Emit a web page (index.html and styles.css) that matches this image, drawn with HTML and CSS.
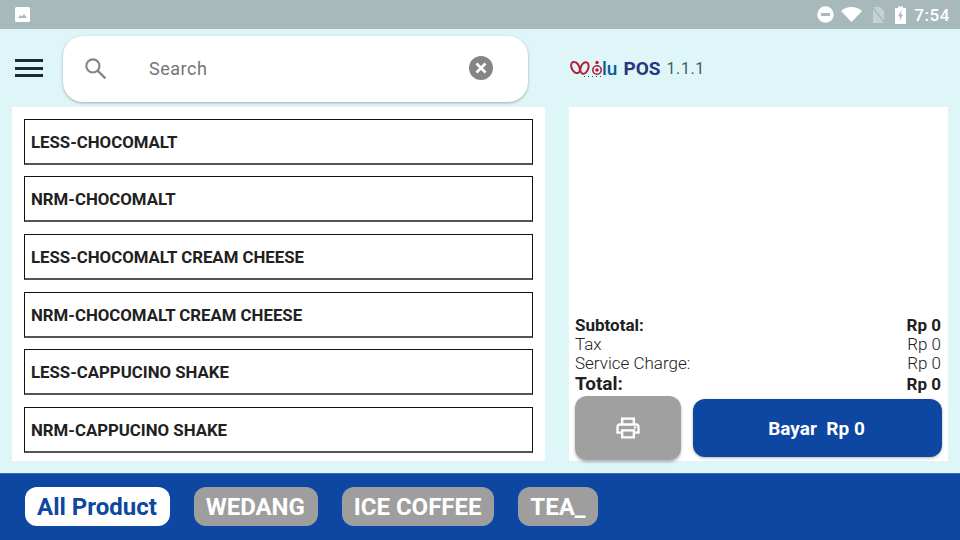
FILE: index.html
```html
<!DOCTYPE html>
<html lang="en">
<head>
    <meta charset="UTF-8">
    <meta name="viewport" content="width=device-width, initial-scale=1.0">
    <title>Woolu POS</title>
    <link rel="stylesheet" href="styles.css">
</head>
<body>
    <div class="status-bar">
        <svg class="status-image" width="15" height="15" viewBox="0 0 15 15">
            <rect width="15" height="15" rx="1.500" fill="#fff"/>
            <path d="M3 11l2.500-3 1.500 1.500 2-2.500 3 4z" fill="#a8b9bc"/>
        </svg>
        <div class="status-right">
            <svg width="17" height="17" viewBox="0 0 17 17">
                <circle cx="8.500" cy="8.500" r="8.200" fill="#fff"/>
                <rect x="4" y="7" width="9" height="3" fill="#a8b9bc"/>
            </svg>
            <svg class="status-wifi" width="21" height="15" viewBox="0 0 21 15">
                <path d="M0 4C3 1.500 6.500 0 10.500 0S18 1.500 21 4L10.500 15z" fill="#fff"/>
            </svg>
            <svg class="status-sim" width="15" height="18" viewBox="0 0 15 18">
                <path d="M2 1h7l4 4v12H2z" fill="#c6d1d3"/>
                <path d="M1 1l13 16" stroke="#a8b9bc" stroke-width="1.500"/>
            </svg>
            <svg class="status-battery" width="11" height="18" viewBox="0 0 11 18">
                <path d="M3 2V0.500h5V2h3v16H0V2z" fill="#fff"/>
                <path d="M6.500 4L3 10.500h2.200L4.500 15 8 8.500H5.800z" fill="#a8b9bc"/>
            </svg>
            <span class="status-time">7:54</span>
        </div>
    </div>

    <header class="top">
        <div class="menu-icon">
            <span></span>
            <span></span>
            <span></span>
        </div>
        <div class="search">
            <svg class="search-icon" width="25" height="25" viewBox="0 0 24 24">
                <circle cx="9.500" cy="9.500" r="6.300" fill="none" stroke="#858585" stroke-width="2"/>
                <path d="M14 14l7.500 7.500" stroke="#858585" stroke-width="2.200"/>
            </svg>
            <span class="search-text">Search</span>
            <svg class="search-clear" width="26" height="26" viewBox="0 0 26 26">
                <circle cx="13" cy="13" r="12" fill="#858585"/>
                <path d="M8.500 8.500l9 9M17.500 8.500l-9 9" stroke="#fff" stroke-width="2.600"/>
            </svg>
        </div>
        <div class="brand">
            <svg class="brand-logo" width="33" height="17" viewBox="0 0 33 17">
                <ellipse cx="5.500" cy="7.500" rx="3.800" ry="6" transform="rotate(-28 5.500 7.500)" fill="none" stroke="#b2203a" stroke-width="2"/>
                <ellipse cx="14.500" cy="8" rx="3.800" ry="6" transform="rotate(22 14.500 8)" fill="none" stroke="#b2203a" stroke-width="2"/>
                <circle cx="27" cy="10" r="4.200" fill="none" stroke="#b2203a" stroke-width="1.600"/>
                <circle cx="27" cy="10" r="1.800" fill="#b2203a"/>
                <circle cx="27" cy="2.500" r="1.700" fill="#b2203a"/>
                <path d="M14 16.500h20" stroke="#37474f" stroke-dasharray="1 3"/>
            </svg>
            <span class="brand-lu">lu</span>
            <span class="brand-pos">POS</span>
            <span class="brand-version">1.1.1</span>
        </div>
    </header>

    <main class="content">
        <section class="products">
            <div class="product">LESS-CHOCOMALT</div>
            <div class="product">NRM-CHOCOMALT</div>
            <div class="product">LESS-CHOCOMALT CREAM CHEESE</div>
            <div class="product">NRM-CHOCOMALT CREAM CHEESE</div>
            <div class="product">LESS-CAPPUCINO SHAKE</div>
            <div class="product">NRM-CAPPUCINO SHAKE</div>
        </section>

        <section class="cart">
            <div class="totals">
                <div class="row row-bold"><span>Subtotal:</span><span>Rp 0</span></div>
                <div class="row"><span>Tax</span><span>Rp 0</span></div>
                <div class="row"><span>Service Charge:</span><span>Rp 0</span></div>
                <div class="row row-total"><span>Total:</span><span class="total-value">Rp 0</span></div>
            </div>
            <div class="actions">
                <button class="btn-print">
                    <svg width="28" height="28" viewBox="0 0 24 24">
                        <path d="M19 8h-1V3H6v5H5c-1.660 0-3 1.340-3 3v6h4v4h12v-4h4v-6c0-1.660-1.340-3-3-3zM8 5h8v3H8V5zm8 14H8v-4h8v4zm2-4v-2H6v2H4v-4c0-.550.450-1 1-1h14c.550 0 1 .450 1 1v4h-2z" fill="#fff"/>
                        <circle cx="18" cy="11.500" r="1" fill="#fff"/>
                    </svg>
                </button>
                <button class="btn-pay">Bayar&nbsp; Rp 0</button>
            </div>
        </section>
    </main>

    <footer class="tabs">
        <div class="tab tab-active">All Product</div>
        <div class="tab">WEDANG</div>
        <div class="tab">ICE COFFEE</div>
        <div class="tab">TEA_</div>
    </footer>
</body>
</html>
```

FILE: styles.css
```css
* {
    box-sizing: border-box;
}

html,
body {
    height: 100%;
}

body {
    font-family: 'Roboto', sans-serif;
    margin: 0;
    padding: 0;
    background-color: #dff6f9;
    color: #212121;
    display: flex;
    flex-direction: column;
    overflow: hidden;
}

.status-bar {
    height: 29px;
    background-color: #a8b9bc;
    display: flex;
    align-items: center;
    justify-content: space-between;
    padding: 0 10px 0 15px;
}

.status-right {
    display: flex;
    align-items: center;
}

.status-wifi {
    margin-left: 7px;
}

.status-sim {
    margin-left: 9px;
}

.status-battery {
    margin-left: 9px;
}

.status-time {
    color: #fff;
    font-size: 17px;
    font-weight: 500;
    letter-spacing: 0.6px;
    margin-left: 8px;
}

.top {
    height: 78px;
    display: flex;
    align-items: center;
    padding-left: 15px;
}

.menu-icon {
    width: 28px;
    display: flex;
    flex-direction: column;
    gap: 4.5px;
}

.menu-icon span {
    display: block;
    height: 3px;
    background-color: #1c2b30;
}

.search {
    width: 465px;
    height: 66px;
    margin-left: 20px;
    margin-top: 2px;
    background-color: #fff;
    border-radius: 20px;
    box-shadow: 0 1px 3px rgba(0, 0, 0, 0.3);
    display: flex;
    align-items: center;
    padding: 0 34px 2px 20px;
}

.search-text {
    flex: 1;
    margin-left: 41px;
    font-size: 18px;
    letter-spacing: 0.5px;
    color: #757575;
}

.brand {
    display: flex;
    align-items: center;
    margin-left: 42px;
}

.brand-lu {
    font-size: 19px;
    font-weight: 500;
    color: #0b5c96;
    margin-left: -1px;
}

.brand-pos {
    font-size: 19px;
    font-weight: 700;
    color: #27367f;
    margin-left: 6px;
}

.brand-version {
    font-size: 16px;
    color: #455a64;
    letter-spacing: 0.6px;
    margin-left: 6px;
}

.content {
    display: flex;
    height: 354px;
    padding-left: 12px;
    gap: 24px;
}

.products {
    width: 533px;
    background-color: #fff;
    padding: 11.8px 12px 0;
    display: flex;
    flex-direction: column;
    gap: 11.6px;
}

.product {
    height: 46px;
    flex-shrink: 0;
    border: 1px solid #111;
    border-bottom-color: #555;
    border-bottom-width: 2px;
    padding: 1.2px 0 0 6px;
    display: flex;
    align-items: center;
    font-size: 16.8px;
    font-weight: 700;
}

.cart {
    width: 379px;
    background-color: #fff;
    padding: 0 7px 0 6px;
    display: flex;
    flex-direction: column;
    justify-content: flex-end;
}

.totals {
    margin-bottom: 1px;
}

.row {
    display: flex;
    justify-content: space-between;
    align-items: baseline;
    font-size: 17px;
    font-weight: 300;
    line-height: 19px;
}

.row-bold {
    font-weight: 700;
}

.row-total {
    font-size: 19px;
    font-weight: 700;
    line-height: 22px;
}

.total-value {
    font-size: 17px;
}

.actions {
    display: flex;
    align-items: center;
    gap: 12px;
    height: 65px;
    padding-bottom: 2px;
}

.actions button {
    border: none;
    color: #fff;
    font-family: inherit;
    padding: 0;
    display: flex;
    align-items: center;
    justify-content: center;
    flex-shrink: 0;
}

.btn-print {
    width: 106px;
    height: 64px;
    background-color: #a0a0a0;
    border-radius: 12px;
    box-shadow: 0 2px 3px rgba(0, 0, 0, 0.3);
}

.actions .btn-pay {
    width: 249px;
    height: 58px;
    padding: 1px 2px 0 0;
    background-color: #0d47a1;
    border-radius: 12px;
    box-shadow: 0 1px 3px rgba(0, 0, 0, 0.3);
    font-size: 19px;
    font-weight: 700;
}

.tabs {
    margin-top: 12px;
    height: 67px;
    background-color: #0d47a1;
    border-top: 1px solid #2b7a9e;
    display: flex;
    align-items: center;
    gap: 23.8px;
    padding: 0 0 1px 25px;
}

.tab {
    height: 39px;
    padding: 0 13px 0 12px;
    border-radius: 12px;
    background-color: #9e9e9e;
    color: #fff;
    font-size: 24px;
    font-weight: 700;
    display: flex;
    align-items: center;
}

.tab-active {
    background-color: #fff;
    color: #0d47a1;
}
```
